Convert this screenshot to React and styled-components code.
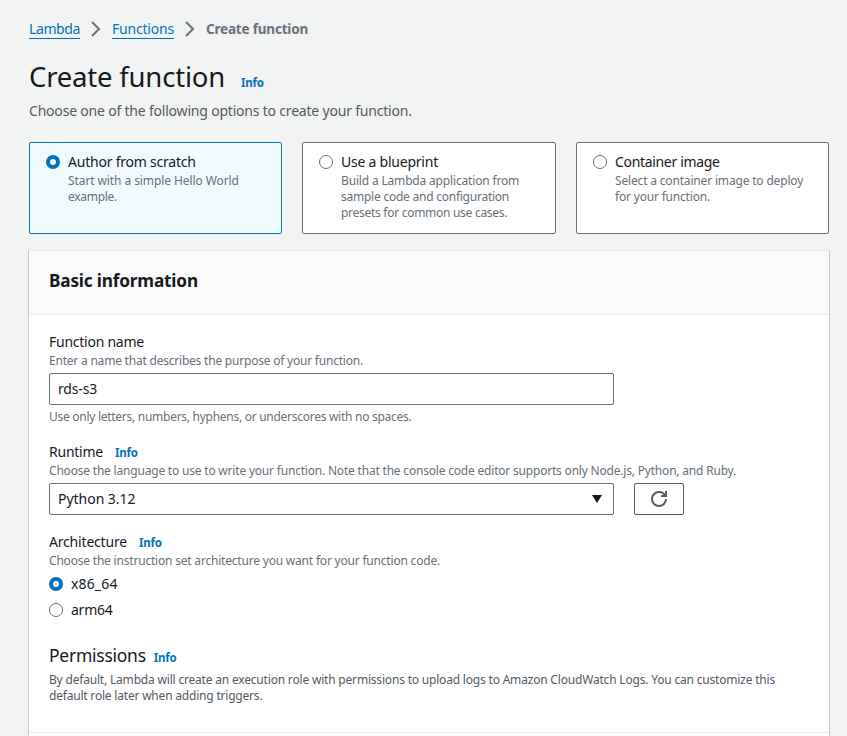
import React from "react";
import styled, { createGlobalStyle } from "styled-components";

const GlobalStyle = createGlobalStyle`
  *, *::before, *::after { box-sizing: border-box; }
  body {
    margin: 0;
    background: #f2f3f3;
    color: #16191f;
    font-family: "Noto Sans", "Open Sans", sans-serif;
    font-size: 14px;
    line-height: 22px;
    overflow: hidden;
  }
`;

const Page = styled.main`
  width: 847px;
  height: 736px;
  padding: 18px 18px 0 29px;
  overflow: hidden;
`;

const Breadcrumbs = styled.nav`
  display: flex;
  height: 22px;
`;

const Crumb = styled.a`
  height: 21px;
  width: ${(p) => p.$width}px;
  border-bottom: 1px solid #0073bb;
  color: #0073bb;
  letter-spacing: ${(p) => p.$spacing}px;
  white-space: nowrap;
`;

const CurrentCrumb = styled.span`
  color: #687078;
  font-size: 13.5px;
  font-weight: 700;
  letter-spacing: -0.19px;
`;

const Chevron = styled.svg`
  width: 16px;
  height: 16px;
  margin: 3px 8px 0;
  fill: none;
  stroke: #687078;
  stroke-width: 2;
`;

const TitleRow = styled.div`
  display: flex;
  align-items: baseline;
  gap: 16px;
  margin-top: 19px;
  height: 36px;
`;

const Title = styled.h1`
  margin: 0;
  font-size: 27.5px;
  font-weight: 400;
  line-height: 36px;
  letter-spacing: -0.2px;
`;

const Info = styled.a`
  color: #0073bb;
  font-size: 11.5px;
  font-weight: 700;
  line-height: 16px;
  letter-spacing: -0.2px;
`;

const Lead = styled.p`
  margin: 5px 0 0;
  color: #545b64;
  letter-spacing: -0.2px;
`;

const Tiles = styled.div`
  display: grid;
  grid-template-columns: 253px 254px 253px;
  gap: 20px;
  height: 92px;
  margin-top: 20px;
`;

const Tile = styled.label`
  display: flex;
  gap: 8px;
  padding: 8px 0 0 16px;
  border: 1px solid ${(p) => (p.$selected ? "#0073bb" : "#687078")};
  border-radius: 2px;
  background: ${(p) => (p.$selected ? "#f1faff" : "#fff")};
`;

const RadioMark = styled.span`
  flex: none;
  width: 14px;
  height: 14px;
  margin-top: 4px;
  border: ${(p) => (p.$selected ? "4px solid #0073bb" : "1px solid #687078")};
  border-radius: 50%;
  background: #fff;
`;

const TileTitle = styled.div`
  letter-spacing: ${(p) => p.$spacing}px;
`;

const Hint = styled.div`
  color: #687078;
  font-size: 12px;
  line-height: 16px;
  letter-spacing: ${(p) => p.$spacing ?? -0.2}px;
  white-space: nowrap;
`;

const Panel = styled.section`
  width: 802px;
  height: 490px;
  margin: 16px 0 0 -1px;
  border: 1px solid #c8cccc;
  border-top-color: #e8eaea;
  border-bottom: 0;
  background: #fff;
`;

const PanelHeader = styled.header`
  height: 64px;
  padding: 19px 20px 0;
  border-bottom: 1px solid #eaeded;
  background: #fafafa;
`;

const PanelTitle = styled.h2`
  margin: 0;
  font-size: 17.2px;
  font-weight: 700;
  line-height: 22px;
  letter-spacing: -0.17px;
`;

const Form = styled.div`
  display: flex;
  flex-direction: column;
  height: 418px;
  padding: 16px 20px 0;
  border-bottom: 1px solid #eaeded;
`;

const Field = styled.div`
  margin-bottom: ${(p) => p.$gap}px;
`;

const Label = styled.div`
  display: flex;
  align-items: baseline;
  gap: 12px;
  height: 22px;
  letter-spacing: ${(p) => p.$spacing}px;
`;

const TextBox = styled.div`
  display: flex;
  align-items: center;
  justify-content: space-between;
  width: 565px;
  height: 32px;
  padding: 0 11px 0 8px;
  border: 1px solid #687078;
  border-radius: 2px;
  letter-spacing: ${(p) => p.$spacing}px;
`;

const ControlRow = styled.div`
  display: flex;
  gap: 20px;
  margin: 4px 0;
`;

const Caret = styled.svg`
  width: 10px;
  height: 8px;
  fill: #16191f;
`;

const RefreshButton = styled.button`
  display: flex;
  align-items: center;
  justify-content: center;
  width: 50px;
  height: 32px;
  padding: 0;
  border: 1px solid #545b64;
  border-radius: 2px;
  background: #fff;

  svg {
    width: 16px;
    height: 16px;
    fill: none;
    stroke: #545b64;
    stroke-width: 2;
  }
`;

const RadioRow = styled.label`
  display: flex;
  gap: 8px;
  margin-top: 4px;
  letter-spacing: ${(p) => p.$spacing}px;
`;

const SectionTitle = styled.div`
  display: flex;
  align-items: baseline;
  gap: 8px;
  height: 22px;
  margin-bottom: 6px;
  font-size: 17.5px;
  letter-spacing: -0.26px;
`;

const SectionText = styled(Hint)`
  color: #545b64;
`;

const ChevronIcon = () => (
  <Chevron viewBox="0 0 16 16" aria-hidden="true">
    <path d="M4 1l7 7-7 7" />
  </Chevron>
);

const tiles = [
  {
    title: "Author from scratch",
    spacing: -0.22,
    selected: true,
    lines: [["Start with a simple Hello World", -0.09], ["example.", -0.28]],
  },
  {
    title: "Use a blueprint",
    spacing: -0.23,
    lines: [
      ["Build a Lambda application from", -0.17],
      ["sample code and configuration", -0.24],
      ["presets for common use cases.", -0.28],
    ],
  },
  {
    title: "Container image",
    spacing: -0.33,
    lines: [["Select a container image to deploy", -0.17], ["for your function.", -0.19]],
  },
];

export default function App() {
  return (
    <>
      <GlobalStyle />
      <Page>
        <Breadcrumbs>
          <Crumb $width={51} $spacing={-0.39}>Lambda</Crumb>
          <ChevronIcon />
          <Crumb $width={62} $spacing={-0.2}>Functions</Crumb>
          <ChevronIcon />
          <CurrentCrumb>Create function</CurrentCrumb>
        </Breadcrumbs>
        <TitleRow>
          <Title>Create function</Title>
          <Info>Info</Info>
        </TitleRow>
        <Lead>Choose one of the following options to create your function.</Lead>

        <Tiles>
          {tiles.map((t) => (
            <Tile key={t.title} $selected={t.selected}>
              <RadioMark $selected={t.selected} />
              <div>
                <TileTitle $spacing={t.spacing}>{t.title}</TileTitle>
                {t.lines.map(([text, spacing]) => (
                  <Hint key={text} $spacing={spacing}>{text}</Hint>
                ))}
              </div>
            </Tile>
          ))}
        </Tiles>

        <Panel>
          <PanelHeader>
            <PanelTitle>Basic information</PanelTitle>
          </PanelHeader>
          <Form>
            <Field $gap={16}>
              <Label $spacing={-0.25}>Function name</Label>
              <Hint $spacing={-0.213}>Enter a name that describes the purpose of your function.</Hint>
              <ControlRow>
                <TextBox $spacing={-0.17}>rds-s3</TextBox>
              </ControlRow>
              <Hint $spacing={-0.275}>Use only letters, numbers, hyphens, or underscores with no spaces.</Hint>
            </Field>

            <Field $gap={12}>
              <Label $spacing={-0.24}>
                Runtime <Info>Info</Info>
              </Label>
              <Hint $spacing={-0.198}>
                Choose the language to use to write your function. Note that the console code editor supports only Node.js, Python, and Ruby.
              </Hint>
              <ControlRow>
                <TextBox $spacing={-0.03}>
                  Python 3.12
                  <Caret viewBox="0 0 10 8" aria-hidden="true">
                    <path d="M0 0h10L5 8z" />
                  </Caret>
                </TextBox>
                <RefreshButton aria-label="Refresh">
                  <svg viewBox="0 0 16 16" aria-hidden="true">
                    <path d="M15 8a7 7 0 1 1-7-7 6.87 6.87 0 0 1 6.3 4" />
                    <path d="M10 5h5V0" />
                  </svg>
                </RefreshButton>
              </ControlRow>
            </Field>

            <Field $gap={23}>
              <Label $spacing={-0.185}>
                Architecture <Info>Info</Info>
              </Label>
              <Hint $spacing={-0.198}>Choose the instruction set architecture you want for your function code.</Hint>
              <RadioRow $spacing={0.15}>
                <RadioMark $selected />
                x86_64
              </RadioRow>
              <RadioRow $spacing={-0.25}>
                <RadioMark />
                arm64
              </RadioRow>
            </Field>

            <SectionTitle>
              Permissions <Info>Info</Info>
            </SectionTitle>
            <SectionText $spacing={-0.189}>
              By default, Lambda will create an execution role with permissions to upload logs to Amazon CloudWatch Logs. You can customize this
            </SectionText>
            <SectionText $spacing={-0.2}>default role later when adding triggers.</SectionText>
          </Form>
        </Panel>
      </Page>
    </>
  );
}
